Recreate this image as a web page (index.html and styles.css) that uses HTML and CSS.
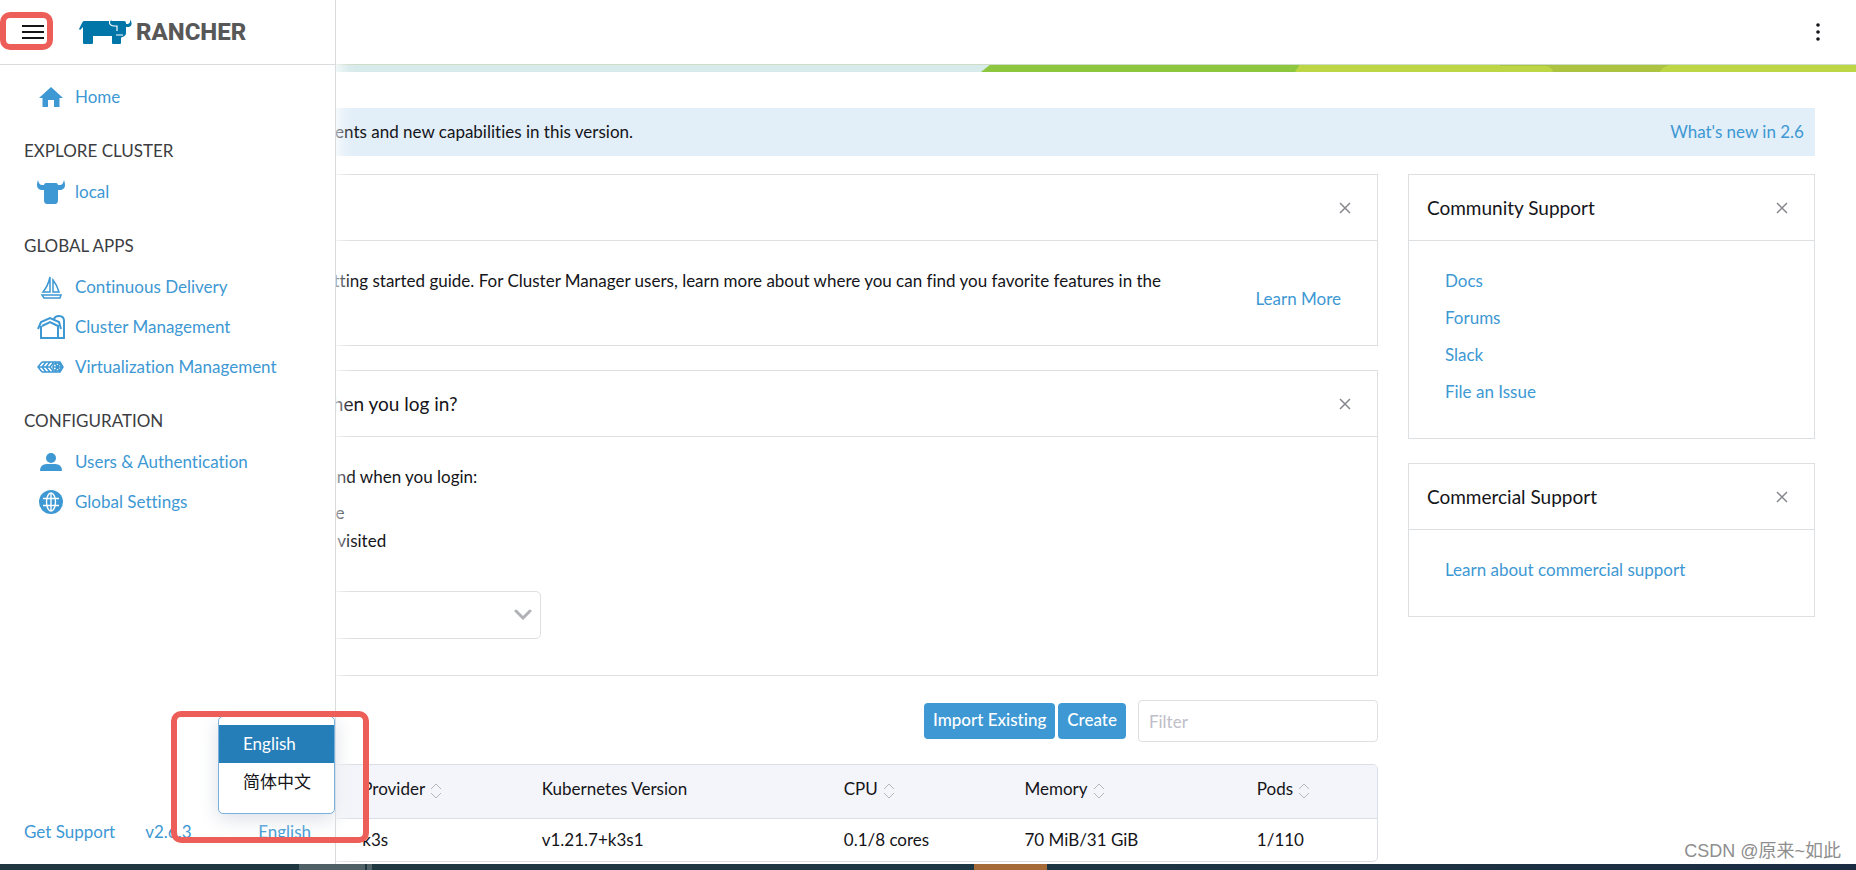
FILE: index.html
```html
<!DOCTYPE html>
<html lang="en">
<head>
<meta charset="utf-8">
<title>Rancher</title>
<link rel="stylesheet" href="styles.css">
</head>
<body>
<div class="app">
  <header class="topbar">
    <button class="icon-btn kebab" aria-label="Page actions">
      <svg width="6" height="18" viewBox="0 0 6 18" fill="#141419"><circle cx="3" cy="2" r="1.800"/><circle cx="3" cy="9" r="1.800"/><circle cx="3" cy="16" r="1.800"/></svg>
    </button>
  </header>
  <svg class="art" viewBox="0 0 1856 8" preserveAspectRatio="none" aria-hidden="true">
    <rect width="1856" height="8" fill="#d8ebeb"/>
    <path d="M981 8L991 0H1856V8z" fill="#8dc63f"/>
    <path d="M1295 8L1300 0H1856V8z" fill="#bcd646"/>
    <path d="M1500 0H1672Q1662 3 1660 8H1553Q1552 3 1546 2H1500z" fill="#abc340"/>
    <rect width="1856" height="1" fill="#cfdcc8"/>
  </svg>
  <main class="content">
    <div class="notice">
      <span>Learn more about the improvements and new capabilities in this version.</span>
      <a href="#">What's new in 2.6</a>
    </div>
    <div class="columns">
      <div class="primary">
        <section class="card">
          <div class="card-head"><h2>Getting Started</h2><button class="icon-btn" aria-label="Close getting started"><svg class="x" viewBox="0 0 12 12"><path d="M1 1L11 11M11 1L1 11"/></svg></button></div>
          <div class="card-body guide">
            <p>Take a look at the the quick getting started guide. For Cluster Manager users, learn more about where you can find you favorite features in the Dashboard UI.</p>
            <a href="#">Learn More</a>
          </div>
        </section>
        <section class="card">
          <div class="card-head"><h2>What do you want to see when you log in?</h2><button class="icon-btn" aria-label="Close login preferences"><svg class="x" viewBox="0 0 12 12"><path d="M1 1L11 11M11 1L1 11"/></svg></button></div>
          <div class="card-body login">
            <p>You can change where you land when you login:</p>
            <div class="options">
              <label><input type="radio" name="land" checked> Take me to the home page</label>
              <label><input type="radio" name="land"> Take me to the area I last visited</label>
            </div>
            <div class="picker">
              <select aria-label="Landing page"><option></option></select>
              <svg viewBox="0 0 18 11"><path d="M2 2L9 9L16 2"/></svg>
            </div>
          </div>
        </section>
        <div class="actions">
          <button class="btn">Import Existing</button>
          <button class="btn">Create</button>
          <input class="filter" type="search" placeholder="Filter" aria-label="Filter">
        </div>
        <div class="table-frame">
          <table>
            <colgroup><col class="c-name"><col class="c-provider"><col class="c-version"><col class="c-cpu"><col class="c-memory"><col></colgroup>
            <thead><tr>
              <th>Name</th>
              <th>Provider <svg class="sort" viewBox="0 0 14 16"><path d="M2 6L7 1L12 6M2 10L7 15L12 10"/></svg></th>
              <th>Kubernetes Version</th>
              <th>CPU <svg class="sort" viewBox="0 0 14 16"><path d="M2 6L7 1L12 6M2 10L7 15L12 10"/></svg></th>
              <th>Memory <svg class="sort" viewBox="0 0 14 16"><path d="M2 6L7 1L12 6M2 10L7 15L12 10"/></svg></th>
              <th>Pods <svg class="sort" viewBox="0 0 14 16"><path d="M2 6L7 1L12 6M2 10L7 15L12 10"/></svg></th>
            </tr></thead>
            <tbody><tr><td>local</td><td>k3s</td><td>v1.21.7+k3s1</td><td>0.1/8 cores</td><td>70 MiB/31 GiB</td><td>1/110</td></tr></tbody>
          </table>
        </div>
      </div>
      <aside class="secondary">
        <section class="card">
          <div class="card-head"><h2>Community Support</h2><button class="icon-btn" aria-label="Close community support"><svg class="x" viewBox="0 0 12 12"><path d="M1 1L11 11M11 1L1 11"/></svg></button></div>
          <div class="card-body links"><a href="#">Docs</a><a href="#">Forums</a><a href="#">Slack</a><a href="#">File an Issue</a></div>
        </section>
        <section class="card">
          <div class="card-head"><h2>Commercial Support</h2><button class="icon-btn" aria-label="Close commercial support"><svg class="x" viewBox="0 0 12 12"><path d="M1 1L11 11M11 1L1 11"/></svg></button></div>
          <div class="card-body links"><a href="#">Learn about commercial support</a></div>
        </section>
      </aside>
    </div>
  </main>

  <nav class="menu">
    <div class="brand">
      <button class="icon-btn burger" aria-label="Menu"><svg width="22" height="16" viewBox="0 0 22 16" stroke="#141419" stroke-width="2"><path d="M0 2H22M0 8H22M0 14H22"/></svg></button>
      <svg class="cow" viewBox="0 0 54 26" fill="#0075a8"><path d="M5 2H45Q47 2 47 4V14Q47 17 43 18L42 19V24Q42 25 41 25H34Q33 25 33 24V17H14V24Q14 25 13 25H5Q4 25 4 24V8L1 11L0 10L3 4Q4 2 5 2Z"/><path d="M51 0Q55 7 49 8L46 8V5L49 5Q52 4 51 0Z"/><path d="M31 0Q29 7 35 7H38V12M37 16H44" fill="none" stroke="#fff" stroke-width="1.200"/><path d="M32 0Q32 3 36 4V6Q31 6 32 0Z"/></svg>
      <span class="wordmark">RANCHER</span>
    </div>
    <div class="menu-body">
      <a class="item home" href="#"><svg viewBox="0 0 28 24"><path d="M14 2L26 13H22.500V22H17V15H11V22H5.500V13H2Z"/></svg>Home</a>
      <h3>EXPLORE CLUSTER</h3>
      <a class="item" href="#"><svg viewBox="0 0 28 24"><path d="M1 0Q2 5 5 5H8V10H4Q-2 9 1 0ZM27 0Q26 5 23 5H20V10H24Q30 9 27 0Z"/><path d="M9 3H19Q21 3 21 6V20Q21 24 18 24H10Q7 24 7 20V6Q7 3 9 3Z"/></svg>local</a>
      <h3>GLOBAL APPS</h3>
      <a class="item" href="#"><svg class="line" viewBox="0 0 28 24"><path d="M13 2V17H6Q11 11 13 2ZM16 5V17H22Q20 10 16 5ZM5 20H24L23 23H7Z"/></svg>Continuous Delivery</a>
      <a class="item" href="#"><svg class="line bold" viewBox="0 0 28 24"><path d="M1 14L4 7L13 3L22 7L24 14M4 11V23H27V6Q27 1 22 1Q18 1 17 4M21 10V23M5 11L13 7L21 11"/></svg>Cluster Management</a>
      <a class="item" href="#"><svg class="line" viewBox="0 0 28 24"><path d="M5 7L1 12L5 17M9 7L5 12L9 17M13 7L9 12L13 17M17 7L13 12L17 17M5 7H23L26 12L23 17H5M1 12H13M16 12H26M18 8L23 16M18 16L23 8"/><circle cx="20" cy="12" r="4"/></svg>Virtualization Management</a>
      <h3>CONFIGURATION</h3>
      <a class="item" href="#"><svg viewBox="0 0 28 24"><circle cx="14" cy="8" r="5"/><path d="M3 21Q3 14 10 14H18Q25 14 25 21Z"/></svg>Users &amp; Authentication</a>
      <a class="item" href="#"><svg viewBox="0 0 28 24"><circle cx="14" cy="12" r="12"/><g fill="none" stroke="#fff" stroke-width="1.400"><ellipse cx="14" cy="12" rx="4.500" ry="9"/><path d="M6 8.500H22M6 15.500H22M14 3V21"/></g></svg>Global Settings</a>
    </div>
    <div class="menu-foot">
      <a href="#">Get Support</a><a href="#">v2.6.3</a><a class="lang" href="#">English</a>
      <ul class="lang-list"><li class="on"><button>English</button></li><li><button>简体中文</button></li></ul>
    </div>
  </nav>
  <div class="mark mark-menu"></div>
  <div class="mark mark-lang"></div>
  <div class="watermark">CSDN @原来~如此</div>
</div>
<div class="taskbar"><i class="tab"></i><i class="tab-edge"></i><i class="alert"></i></div>
</body>
</html>
```

FILE: styles.css
```css
* { box-sizing: border-box; }
body {
  margin: 0;
  height: 100vh;
  display: flex;
  flex-direction: column;
  overflow: hidden;
  background: #fff;
  color: #141419;
  font: 17px/24px Lato, "Noto Sans CJK SC", sans-serif;
  font-variant-ligatures: none;
}
a { color: #3d98d3; text-decoration: none; }
h2, h3, p, ul { margin: 0; padding: 0; font-weight: 400; }
button, input, select { font: inherit; color: inherit; }
.icon-btn { display: flex; padding: 0; border: 0; background: none; }

.app { position: relative; flex: 1; min-height: 0; overflow: hidden; }
.topbar {
  display: flex;
  align-items: center;
  justify-content: flex-end;
  height: 64px;
  padding-right: 35px;
}
.art { display: block; width: 100%; height: 8px; }
.content { padding: 36px 41px 0 85px; }
.notice {
  display: flex;
  justify-content: space-between;
  padding: 12px 11px;
  background: #e2eef8;
}
.columns { display: grid; grid-template-columns: 54fr 17fr; gap: 30px; margin-top: 18px; }
.primary, .secondary { display: flex; flex-direction: column; gap: 24px; min-width: 0; }
.card { border: 1px solid #dce0e3; }
.card-head {
  display: flex;
  align-items: center;
  justify-content: space-between;
  height: 66px;
  padding: 0 26px 0 18px;
  border-bottom: 1px solid #dce0e3;
}
.card-head h2 { font-size: 19px; }
.x { width: 12px; height: 12px; fill: none; stroke: #85878c; stroke-width: 1.5; }
.card-body { padding: 28px 36px; }
.guide { display: flex; align-items: center; gap: 64px; padding-left: 22px; }
.guide p { flex: 1; }
.guide a { margin-top: 12px; white-space: nowrap; }
.login { padding-bottom: 36px; }
.options { display: flex; flex-direction: column; gap: 4px; margin-top: 12px; }
.options label { display: flex; align-items: center; gap: 8px; }
.options input { width: 18px; height: 18px; margin: 0; }
.picker { position: relative; width: 419px; margin-top: 38px; }
.picker select {
  display: block;
  width: 100%;
  height: 48px;
  appearance: none;
  border: 1px solid #dce0e3;
  border-radius: 5px;
  background: #fff;
}
.picker svg {
  position: absolute;
  right: 9px;
  top: 18px;
  width: 18px;
  height: 11px;
  fill: none;
  stroke: #b0b2b6;
  stroke-width: 3;
  stroke-linecap: round;
}
.actions { display: flex; align-items: center; justify-content: flex-end; gap: 3px; }
.btn {
  height: 36px;
  padding: 0 9px 2px;
  border: 0;
  border-radius: 4px;
  background: #3d98d3;
  color: #fff;
  font-weight: 500;
}
.filter {
  width: 240px;
  height: 42px;
  margin-left: 9px;
  padding: 0 10px;
  border: 1px solid #dce0e3;
  border-radius: 4px;
}
.filter::placeholder { color: #bebec8; }
.table-frame { margin-top: -2px; border: 1px solid #dcdee7; border-radius: 5px; overflow: hidden; }
table { width: 100%; table-layout: fixed; border-collapse: collapse; }
th { height: 53px; padding: 0 0 4px; background: #f4f5fa; border-bottom: 1px solid #dcdee7; font-weight: 400; text-align: left; }
td { height: 43px; padding: 0; }
th:first-child, td:first-child { padding-left: 12px; }
.c-name { width: 21.4%; }
.c-provider { width: 13.9%; }
.c-version { width: 23.4%; }
.c-cpu { width: 14%; }
.c-memory { width: 18%; }
.sort { width: 14px; height: 16px; vertical-align: -4px; fill: none; stroke: #b4b6bc; }
.links { display: flex; flex-direction: column; gap: 13px; padding-bottom: 34px; }

.menu {
  position: absolute;
  inset: 0 auto 0 0;
  width: 336px;
  display: flex;
  flex-direction: column;
  background: #fff;
  border-right: 1px solid #d8dcde;
  box-shadow: 0 0 16px 3px #fff;
}
.brand { display: flex; align-items: center; height: 65px; padding: 0 22px; border-bottom: 1px solid #d8dcde; }
.cow { width: 54px; height: 26px; margin-left: 35px; }
.wordmark { margin-left: 3px; color: #585858; font: 800 24px/26px Roboto, "Liberation Sans", sans-serif; }
.menu-body { flex: 1; padding-top: 12px; }
.item { display: flex; align-items: center; gap: 10px; height: 40px; padding-left: 37px; }
.item svg { width: 28px; height: 24px; fill: #3d98d3; }
.item .line { fill: none; stroke: #3d98d3; stroke-width: 1.5; }
.item .bold { stroke-width: 2; }
.menu h3 { padding: 22px 24px 9px; font-size: 17px; line-height: 24px; color: #3c3d42; }
.menu-foot { position: relative; display: flex; padding: 0 24px 20px; gap: 30px; }
.lang { margin-left: auto; }
.lang-list {
  position: absolute;
  right: 0;
  bottom: 50px;
  width: 117px;
  padding: 8px 0 12px;
  list-style: none;
  background: #fff;
  border: 1px solid #78b1de;
  border-radius: 5px;
  box-shadow: 0 5px 20px #dcdee7;
}
.lang-list button { display: block; width: 100%; height: 38px; padding: 0 0 0 24px; border: 0; background: none; text-align: left; white-space: nowrap; }
.lang-list .on { background: #267eb8; color: #fff; }
.mark { position: absolute; border: 6px solid #ee5e58; border-radius: 10px; }
.mark-menu { left: 0; top: 12px; width: 53px; height: 38px; }
.mark-lang { left: 171px; top: 711px; width: 198px; height: 132px; }
.watermark { position: absolute; right: 15px; bottom: 0; color: #8e8e8e; font: 18px/26px "Liberation Sans", "Noto Sans CJK SC", sans-serif; }
.taskbar { display: flex; height: 6px; background: linear-gradient(90deg, #20373f, #1e3744 50%, #1b2c42); }
.tab { width: 66px; margin-left: 299px; background: #4f6167; }
.tab-edge { width: 5px; margin-left: 2px; background: #4f6167; }
.alert { width: 73px; margin-left: 602px; background: #a66a38; }
```
